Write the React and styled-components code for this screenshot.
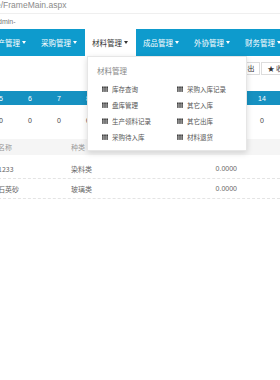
import React from 'react';
import styled, { createGlobalStyle } from 'styled-components';
import { FaTh } from 'react-icons/fa';

const navItems = [
  { label: '生产管理' },
  { label: '采购管理' },
  { label: '材料管理', active: true },
  { label: '成品管理' },
  { label: '外协管理' },
  { label: '财务管理' },
];

const menuItems = [
  '库存查询', '采购入库记录',
  '盘库管理', '其它入库',
  '生产领料记录', '其它出库',
  '采购待入库', '材料退货',
];

const stockCols = [5, 6, 7, 8, 9, 10, 11, 12, 13, 14, 15];

const materials = [
  { name: '1233', kind: '染料类', value: '0.0000' },
  { name: '石英砂', kind: '玻璃类', value: '0.0000' },
];

const App = () => {
  return (
    <Page>
      <GlobalStyle />
      <AddressBar>e/FrameMain.aspx</AddressBar>
      <Crumb>dmin-</Crumb>

      <NavWrap>
        <Nav>
          {navItems.map((item) => (
            <NavItem key={item.label} $active={item.active}>
              {item.label}
              <Caret />
            </NavItem>
          ))}
        </Nav>

        <Dropdown>
          <MenuTitle>材料管理</MenuTitle>
          <MenuGrid>
            {menuItems.map((m) => (
              <MenuItem key={m}>
                <FaTh size={6} />
                <span>{m}</span>
              </MenuItem>
            ))}
          </MenuGrid>
        </Dropdown>
      </NavWrap>

      <Toolbar>
        <ToolButton>导出</ToolButton>
        <ToolButton>★ 收藏</ToolButton>
      </Toolbar>

      <StockTable>
        <StockRow $head>
          {stockCols.map((c) => (
            <StockCell key={c}>{c}</StockCell>
          ))}
        </StockRow>
        <StockRow>
          {stockCols.map((c) => (
            <StockCell key={c}>0</StockCell>
          ))}
        </StockRow>
      </StockTable>

      <ListTable>
        <ListHead>
          <NameCol>名称</NameCol>
          <KindCol>种类</KindCol>
        </ListHead>
        {materials.map((r) => (
          <ListRow key={r.name}>
            <NameCol>{r.name}</NameCol>
            <KindCol>{r.kind}</KindCol>
            <ValueCol>{r.value}</ValueCol>
          </ListRow>
        ))}
      </ListTable>
    </Page>
  );
};

export default App;

const GlobalStyle = createGlobalStyle`
  html, body {
    margin: 0;
    padding: 0;
    background: #fff;
  }
  body {
    font-family: 'Liberation Sans', 'Noto Sans CJK SC', sans-serif;
  }
`;

const Page = styled.div`
  width: 280px;
  height: 380px;
  overflow: hidden;
  background: #fff;
`;

const AddressBar = styled.div`
  height: 13px;
  line-height: 10px;
  font-size: 8.5px;
  color: #8a8a8a;
  text-indent: -4px;
  border-bottom: 1px solid #efefef;
  white-space: nowrap;
`;

const Crumb = styled.div`
  height: 15px;
  line-height: 15px;
  font-size: 7px;
  color: #777;
  text-indent: -2px;
`;

const NavWrap = styled.div`
  position: relative;
`;

const Nav = styled.div`
  display: flex;
  height: 27px;
  background: #0e9bcd;
  margin-left: -17px;
  white-space: nowrap;
`;

const NavItem = styled.div`
  display: flex;
  align-items: center;
  flex: none;
  padding: 0 7px;
  width: 37px;
  font-size: 7.5px;
  color: ${(p) => (p.$active ? '#333' : '#fff')};
  background: ${(p) => (p.$active ? '#fff' : 'transparent')};
  font-family: 'Noto Sans CJK SC', sans-serif;
`;

const Caret = styled.span`
  margin-left: 2px;
  width: 0;
  height: 0;
  border-left: 2.5px solid transparent;
  border-right: 2.5px solid transparent;
  border-top: 3px solid currentColor;
`;

const Dropdown = styled.div`
  position: absolute;
  left: 87px;
  top: 27px;
  width: 160px;
  height: 95px;
  box-sizing: border-box;
  background: #fff;
  border: 1px solid #e6e6e6;
  box-shadow: 0 2px 6px rgba(0, 0, 0, 0.15);
  padding-top: 9px;
  z-index: 2;
  font-family: 'Noto Sans CJK SC', sans-serif;
`;

const MenuTitle = styled.div`
  padding-left: 9px;
  height: 10px;
  line-height: 10px;
  font-size: 7.5px;
  color: #888;
`;

const MenuGrid = styled.div`
  display: grid;
  grid-template-columns: 75px 75px;
  grid-auto-rows: 16px;
  margin-top: 5px;
  padding-left: 14px;
`;

const MenuItem = styled.div`
  display: flex;
  align-items: center;
  gap: 4px;
  font-size: 6.5px;
  color: #555;

  svg {
    color: #333;
  }
`;

const Toolbar = styled.div`
  display: flex;
  justify-content: flex-end;
  gap: 1px;
  height: 35px;
  padding-top: 6px;
  box-sizing: border-box;
  margin-right: -16px;
`;

const ToolButton = styled.div`
  height: 13px;
  box-sizing: border-box;
  padding: 0 5px;
  line-height: 11px;
  border: 1px solid #ddd;
  font-size: 7px;
  color: #333;
  background: #fff;
  white-space: nowrap;
  font-family: 'Noto Sans CJK SC', sans-serif;
`;

const StockTable = styled.div`
  margin-left: -13.5px;
`;

const StockRow = styled.div`
  display: flex;
  height: ${(p) => (p.$head ? '14px' : '30px')};
  background: ${(p) => (p.$head ? '#1691c1' : '#fff')};
  color: ${(p) => (p.$head ? '#fff' : '#444')};
  font-size: 7px;
`;

const StockCell = styled.div`
  flex: none;
  width: 29px;
  display: flex;
  align-items: center;
  justify-content: center;
`;

const ListTable = styled.div`
  margin-top: 4px;
  margin-left: -2px;
  font-family: 'Noto Sans CJK SC', sans-serif;
  font-size: 7px;
`;

const ListHead = styled.div`
  display: flex;
  align-items: center;
  height: 16px;
  background: #f5f5f5;
  color: #999;
  margin-bottom: 4px;
`;

const ListRow = styled.div`
  display: flex;
  align-items: center;
  height: 20px;
  color: #666;
  border-bottom: 1px dashed #e4e4e4;
  box-sizing: border-box;
`;

const NameCol = styled.div`
  width: 73px;
`;

const KindCol = styled.div`
  width: 80px;
`;

const ValueCol = styled.div`
  width: 86px;
  text-align: right;
  font-family: 'Liberation Sans', sans-serif;
`;
